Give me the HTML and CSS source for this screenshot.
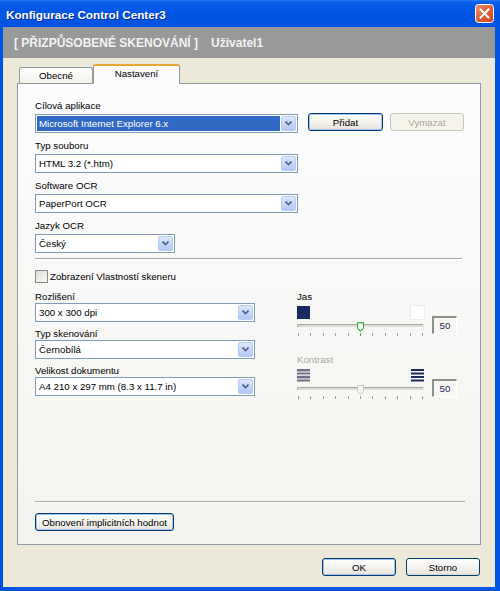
FILE: index.html
```html
<!DOCTYPE html>
<html lang="cs">
<head>
<meta charset="utf-8">
<title>Konfigurace Control Center3</title>
<link rel="stylesheet" href="styles.css">
</head>
<body>
<div class="window">
  <div class="titlebar">
    <span class="title">Konfigurace Control Center3</span>
    <span class="close">
      <svg width="19" height="19" viewBox="0 0 19 19">
        <defs>
          <linearGradient id="cg" x1="0" y1="0" x2="1" y2="1">
            <stop offset="0" stop-color="#f0916c"/>
            <stop offset="0.5" stop-color="#e0603a"/>
            <stop offset="1" stop-color="#c8441d"/>
          </linearGradient>
        </defs>
        <rect x="0.5" y="0.5" width="18" height="18" rx="3" fill="url(#cg)" stroke="#ffffff"/>
        <path d="M5.5 5.5 L13.5 13.5 M13.5 5.5 L5.5 13.5" stroke="#ffffff" stroke-width="2" stroke-linecap="square"/>
      </svg>
    </span>
  </div>
  <div class="client">
    <div class="banner"><span>[ PŘIZPŮSOBENÉ SKENOVÁNÍ ]</span><span class="user">Uživatel1</span></div>
    <div class="body">
      <div class="tabs">
        <div class="tab">Obecné</div>
        <div class="tab active">Nastavení</div>
      </div>
      <div class="panel">
        <div class="row-app">
          <div class="field w263">
            <div class="label">Cílová aplikace</div>
            <div class="combo"><span class="sel">Microsoft Internet Explorer 6.x</span><span class="arrow"><svg width="7" height="5" viewBox="0 0 7 5"><path d="M0.5 0.5 L3.5 3.5 L6.5 0.5" fill="none" stroke="#4d6185" stroke-width="1.6"/></svg></span></div>
          </div>
          <div class="btn default w75">Přidat</div>
          <div class="btn disabled w74">Vymazat</div>
        </div>
        <div class="field w263 mt6">
          <div class="label">Typ souboru</div>
          <div class="combo"><span class="val">HTML 3.2 (*.htm)</span><span class="arrow"><svg width="7" height="5" viewBox="0 0 7 5"><path d="M0.5 0.5 L3.5 3.5 L6.5 0.5" fill="none" stroke="#4d6185" stroke-width="1.6"/></svg></span></div>
        </div>
        <div class="field w263 mt6">
          <div class="label">Software OCR</div>
          <div class="combo"><span class="val">PaperPort OCR</span><span class="arrow"><svg width="7" height="5" viewBox="0 0 7 5"><path d="M0.5 0.5 L3.5 3.5 L6.5 0.5" fill="none" stroke="#4d6185" stroke-width="1.6"/></svg></span></div>
        </div>
        <div class="field w140 mt6">
          <div class="label">Jazyk OCR</div>
          <div class="combo"><span class="val">Český</span><span class="arrow"><svg width="7" height="5" viewBox="0 0 7 5"><path d="M0.5 0.5 L3.5 3.5 L6.5 0.5" fill="none" stroke="#4d6185" stroke-width="1.6"/></svg></span></div>
        </div>
        <div class="sep sep-top"></div>
        <div class="check-row">
          <span class="checkbox"></span>
          <span class="check-label">Zobrazení Vlastností skeneru</span>
        </div>
        <div class="lower">
          <div class="left-col">
            <div class="field2">
              <div class="label2">Rozlišení</div>
              <div class="combo"><span class="val">300 x 300 dpi</span><span class="arrow"><svg width="7" height="5" viewBox="0 0 7 5"><path d="M0.5 0.5 L3.5 3.5 L6.5 0.5" fill="none" stroke="#4d6185" stroke-width="1.6"/></svg></span></div>
            </div>
            <div class="field2 mt6">
              <div class="label2">Typ skenování</div>
              <div class="combo"><span class="val">Černobílá</span><span class="arrow"><svg width="7" height="5" viewBox="0 0 7 5"><path d="M0.5 0.5 L3.5 3.5 L6.5 0.5" fill="none" stroke="#4d6185" stroke-width="1.6"/></svg></span></div>
            </div>
            <div class="field2 mt6">
              <div class="label2">Velikost dokumentu</div>
              <div class="combo"><span class="val">A4 210 x 297 mm (8.3 x 11.7 in)</span><span class="arrow"><svg width="7" height="5" viewBox="0 0 7 5"><path d="M0.5 0.5 L3.5 3.5 L6.5 0.5" fill="none" stroke="#4d6185" stroke-width="1.6"/></svg></span></div>
            </div>
          </div>
          <div class="right-col">
            <div class="label2">Jas</div>
            <div class="slider-row">
              <div class="slider">
                <div class="icons">
                  <span class="sq dark"></span>
                  <span class="sq light"></span>
                </div>
                <div class="track-area">
                  <div class="track"></div>
                  <svg class="thumb" width="7" height="10" viewBox="0 0 7 10"><path d="M0.5 0.5 H6.5 V6.5 L3.5 9.5 L0.5 6.5 Z" fill="#f4f4ee" stroke="#2fa12f"/><path d="M1 1 H6" stroke="#5fcf4f"/><path d="M1.5 7 L3.5 8.8 L5.5 7" stroke="#3cb43c" fill="none"/></svg>
                  <div class="ticks"><i></i><i></i><i></i><i></i><i></i><i class="g"></i><i></i><i></i><i></i><i></i><i></i></div>
                </div>
              </div>
              <div class="valbox">50</div>
            </div>
            <div class="label2 dis mt-k">Kontrast</div>
            <div class="slider-row">
              <div class="slider">
                <div class="icons">
                  <svg class="stripes" width="13" height="13" viewBox="0 0 13 13"><rect x="0" y="0" width="13" height="2" fill="#6e7183"/><rect x="0" y="2" width="13" height="1" fill="#b9bac2"/><rect x="0" y="3.5" width="13" height="2" fill="#6e7183"/><rect x="0" y="5.5" width="13" height="1" fill="#b9bac2"/><rect x="0" y="7" width="13" height="2" fill="#6e7183"/><rect x="0" y="9" width="13" height="1" fill="#b9bac2"/><rect x="0" y="10.5" width="13" height="2" fill="#6e7183"/></svg>
                  <svg class="stripes" width="13" height="13" viewBox="0 0 13 13"><rect x="0" y="0" width="13" height="2" fill="#1c2a63"/><rect x="0" y="3.5" width="13" height="2" fill="#1c2a63"/><rect x="0" y="7" width="13" height="2" fill="#1c2a63"/><rect x="0" y="10.5" width="13" height="2" fill="#1c2a63"/></svg>
                </div>
                <div class="track-area">
                  <div class="track"></div>
                  <svg class="thumb" width="7" height="10" viewBox="0 0 7 10"><path d="M0.5 0.5 H6.5 V6.5 L3.5 9.5 L0.5 6.5 Z" fill="#f6f5f0" stroke="#c9c7bd"/></svg>
                  <div class="ticks"><i></i><i></i><i></i><i></i><i></i><i></i><i></i><i></i><i></i><i></i><i></i></div>
                </div>
              </div>
              <div class="valbox">50</div>
            </div>
          </div>
        </div>
        <div class="bottom">
          <div class="sep"></div>
          <div class="btn default reset">Obnovení implicitních hodnot</div>
        </div>
      </div>
      <div class="footer">
        <div class="btn default w74">OK</div>
        <div class="btn w74">Storno</div>
      </div>
    </div>
  </div>
</div>
</body>
</html>
```

FILE: styles.css
```css
* { box-sizing: border-box; }
html, body { margin: 0; padding: 0; }
body {
  width: 500px;
  height: 591px;
  overflow: hidden;
  font-family: "Liberation Sans", Arial, sans-serif;
  font-size: 9.7px;
  color: #000;
  background: #0054e3;
}
.window {
  width: 500px;
  height: 591px;
  display: flex;
  flex-direction: column;
  background: #0054e3;
}
.titlebar {
  height: 27px;
  flex: none;
  display: flex;
  align-items: center;
  padding: 0 6px 0 6px;
  background: linear-gradient(#2a78f5 0, #0a5fea 2px, #0056e6 40%, #0053df 100%);
}
.title {
  flex: 1;
  color: #fff;
  font-weight: bold;
  font-size: 11.7px;
  text-shadow: 1px 1px 0 #0a2ea8;
  padding-top: 1px;
}
.close { width: 19px; height: 19px; display: block; }
.close svg { display: block; }

.client {
  flex: 1;
  margin: 0 5px 4px 3px;
  background: #ece9d8;
  display: flex;
  flex-direction: column;
}
.banner {
  height: 31px;
  flex: none;
  background: #999999;
  color: #f3f3f3;
  font-weight: bold;
  font-size: 12px;
  padding-left: 11px;
  display: flex;
  align-items: center;
  gap: 13px;
}
.body {
  flex: 1;
  padding: 6px 14px 0 14px;
  display: flex;
  flex-direction: column;
}
.tabs {
  display: flex;
  align-items: flex-end;
  height: 20px;
  margin-left: 2px;
  margin-bottom: -1px;
  position: relative;
  z-index: 1;
}
.tab {
  width: 74px;
  height: 16px;
  margin-bottom: 1px;
  border: 1px solid #919b9c;
  border-bottom: none;
  border-radius: 3px 3px 0 0;
  background: linear-gradient(#fefefe, #f2f1ea);
  text-align: center;
  line-height: 15px;
}
.tab.active {
  width: 87px;
  height: 20px;
  margin-bottom: 0;
  border-top: 2px solid #f0a530;
  background: #fcfcfe;
  line-height: 16px;
}
.panel {
  height: 462px;
  border: 1px solid #919b9c;
  background: linear-gradient(#fcfcfe, #f4f3ee);
  padding: 15px 15px 13px 17px;
  display: flex;
  flex-direction: column;
}
.field { display: flex; flex-direction: column; }
.w263 { width: 263px; }
.w140 { width: 140px; }
.mt6 { margin-top: 6px; }
.label {
  height: 13px;
  line-height: 13px;
  margin-bottom: 2px;
  white-space: nowrap;
}
.label2 {
  height: 12px;
  line-height: 12px;
  white-space: nowrap;
}
.label2.dis { color: #aca899; }
.combo {
  height: 19px;
  border: 1px solid #7f9db9;
  background: #fff;
  display: flex;
  align-items: stretch;
  padding: 1px;
}
.combo .val {
  flex: 1;
  padding-left: 2px;
  line-height: 15px;
  white-space: nowrap;
  overflow: hidden;
}
.combo .sel {
  flex: 1;
  margin-right: 1px;
  padding-left: 2px;
  line-height: 15px;
  background: #316ac5;
  color: #fff;
  white-space: nowrap;
  overflow: hidden;
}
.combo .arrow {
  width: 15px;
  flex: none;
  border: 1px solid #b7cbf5;
  border-radius: 2px;
  background: linear-gradient(#dce7fe, #c3d4fb 60%, #b3c8f6);
  display: flex;
  align-items: center;
  justify-content: center;
}
.combo .arrow svg { display: block; }

.row-app {
  display: flex;
  align-items: flex-end;
}
.row-app .btn.default { margin-left: 10px; margin-bottom: 2px; }
.row-app .btn.disabled { margin-left: 7px; margin-bottom: 2px; }

.btn {
  height: 18px;
  border: 1px solid #003c74;
  border-radius: 3px;
  background: linear-gradient(#ffffff, #f4f3ef 50%, #e8e6de 90%, #d8d4c8);
  display: flex;
  align-items: center;
  justify-content: center;
  white-space: nowrap;
}
.btn.default {
  box-shadow: inset 0 0 0 1px #a9c3ee;
}
.btn.disabled {
  border-color: #c9c7ba;
  background: #f5f4ea;
  color: #aca899;
  box-shadow: none;
}
.w75 { width: 75px; }
.w74 { width: 74px; }

.sep {
  height: 2px;
  border-top: 1px solid #a8a7a0;
  border-bottom: 1px solid #ffffff;
}
.sep-top { margin-top: 5px; margin-right: 3px; }
.check-row {
  margin-top: 10px;
  height: 13px;
  display: flex;
  align-items: center;
}
.checkbox {
  width: 13px;
  height: 13px;
  border: 1px solid #8a8a86;
  background: linear-gradient(135deg, #dcdbd5, #fbfbf9);
}
.check-label { margin-left: 2px; line-height: 13px; }

.lower {
  display: flex;
  margin-top: 8px;
}
.left-col { width: 220px; display: flex; flex-direction: column; }
.field2 { display: flex; flex-direction: column; }
.right-col {
  margin-left: 42px;
  display: flex;
  flex-direction: column;
}
.slider-row { display: flex; }
.slider { width: 127px; display: flex; flex-direction: column; }
.icons {
  margin-top: 3px;
  height: 13px;
  display: flex;
  justify-content: space-between;
}
.sq { width: 13px; height: 13px; display: block; }
.sq.dark { background: #1c2a63; }
.sq.light { background: #ffffff; box-shadow: 0 0 0 1px #efeee9; }
.stripes { display: block; }
.track-area {
  height: 18px;
  position: relative;
}
.track {
  position: absolute;
  left: 0;
  right: 0;
  top: 5px;
  height: 4px;
  border: 1px solid #a5a49f;
  border-bottom-color: #f8f8f6;
  border-right-color: #e5e4df;
  border-radius: 2px;
  background: #dedcd4;
}
.thumb {
  position: absolute;
  left: 60px;
  top: 3px;
  display: block;
}
.ticks {
  position: absolute;
  left: 1px;
  right: 1px;
  top: 14px;
  height: 3px;
  display: flex;
  justify-content: space-between;
}
.ticks i { display: block; width: 1px; height: 3px; background: #9f9e99; }
.ticks i.g { background: #4fb04f; }
.valbox {
  width: 25px;
  height: 18px;
  margin-left: 8px;
  align-self: flex-end;
  margin-bottom: 3px;
  border-top: 2px solid #8e8e8a;
  border-left: 2px solid #8e8e8a;
  border-right: 1px solid #ffffff;
  border-bottom: 1px solid #ffffff;
  background: #f6f5f1;
  color: #1f2b5c;
  display: flex;
  align-items: center;
  justify-content: center;
}
.mt-k { margin-top: 17px; }

.bottom {
  margin-top: auto;
  display: flex;
  flex-direction: column;
}
.reset {
  width: 139px;
  margin-top: 10px;
}
.footer {
  display: flex;
  justify-content: flex-end;
  gap: 10px;
  margin-top: 13px;
  padding-right: 1px;
}
```
